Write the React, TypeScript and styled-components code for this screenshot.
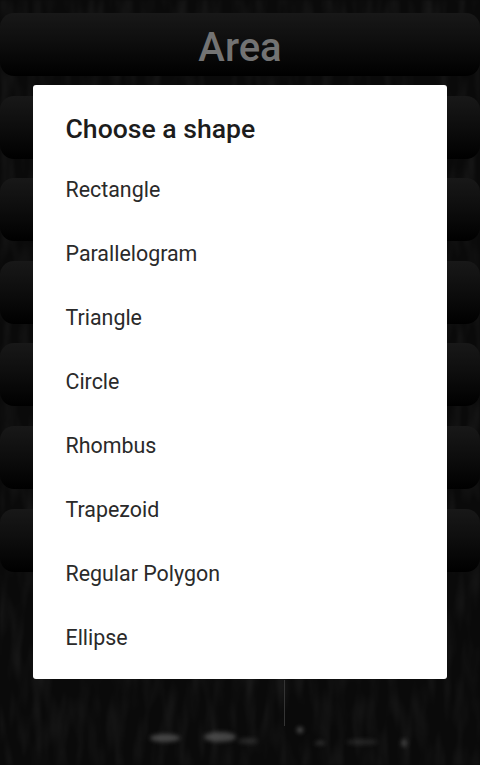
import styled, { createGlobalStyle } from "styled-components";

const shapes = [
  "Rectangle",
  "Parallelogram",
  "Triangle",
  "Circle",
  "Rhombus",
  "Trapezoid",
  "Regular Polygon",
  "Ellipse",
];

const GlobalStyle = createGlobalStyle`
  html, body {
    margin: 0;
    padding: 0;
    background: #0b0b0b;
  }
`;

const Screen = styled.div`
  position: relative;
  width: 480px;
  height: 765px;
  overflow: hidden;
  font-family: Roboto, "Liberation Sans", sans-serif;
  background-color: #0a0a0a;
`;

const Grain = styled.svg`
  position: absolute;
  inset: 0;
  width: 480px;
  height: 765px;
`;

const Menu = styled.div`
  position: relative;
  display: flex;
  flex-direction: column;
  gap: 19.6px;
  padding-top: 13px;
`;

const MenuButton = styled.div<{ $heading?: boolean }>`
  height: 63px;
  border-radius: 14px;
  display: flex;
  align-items: center;
  justify-content: center;
  padding-top: ${(p) => (p.$heading ? "5px" : "0")};
  box-sizing: border-box;
  background: linear-gradient(#181818, #0e0e0e 45%, #000);
  color: #737373;
  font-size: ${(p) => (p.$heading ? "40px" : "0")};
  font-weight: 500;
`;

const Sheet = styled.div`
  position: absolute;
  left: 33px;
  top: 85px;
  width: 414px;
  height: 594px;
  box-sizing: border-box;
  padding: 28px 32.5px 0;
  background: #fff;
  border-radius: 3px;
`;

const Heading = styled.h2`
  margin: 0 0 12.5px;
  height: 32px;
  line-height: 32px;
  font-size: 26.6px;
  font-weight: 500;
  color: #1c1c1c;
`;

const Options = styled.ul`
  margin: 0;
  padding: 0;
  list-style: none;
`;

const Option = styled.li`
  height: 64px;
  line-height: 64px;
  font-size: 21.4px;
  color: #2a2a2a;
`;

export default function App() {
  return (
    <Screen>
      <GlobalStyle />

      <Grain viewBox="0 0 480 765">
        <defs>
          <filter id="grain" x="0" y="0" width="100%" height="100%">
            <feTurbulence type="fractalNoise" baseFrequency="0.09 0.02" numOctaves="2" seed="7" />
            <feColorMatrix values="0 0 0 0 1  0 0 0 0 1  0 0 0 0 1  1.2 0 0 0 -0.5" />
            <feGaussianBlur stdDeviation="1" />
          </filter>
          <filter id="soft" x="-50%" y="-100%" width="200%" height="300%">
            <feGaussianBlur stdDeviation="2.2" />
          </filter>
        </defs>
        <rect width="480" height="765" filter="url(#grain)" opacity="0.1" />
        <line x1="284.5" y1="680" x2="284.5" y2="726" stroke="#343434" />
        <g fill="#6a6a6a" filter="url(#soft)">
          <ellipse cx="165" cy="738" rx="15" ry="4" opacity="0.6" />
          <ellipse cx="220" cy="737" rx="16" ry="5" opacity="0.6" />
          <ellipse cx="248" cy="741" rx="10" ry="3" opacity="0.3" />
          <ellipse cx="300" cy="730" rx="3" ry="3" opacity="0.7" />
          <ellipse cx="320" cy="743" rx="5" ry="2" opacity="0.4" />
          <ellipse cx="362" cy="742" rx="16" ry="3" opacity="0.25" />
          <ellipse cx="404" cy="743" rx="3" ry="4" opacity="0.5" />
        </g>
      </Grain>

      <Menu>
        <MenuButton $heading>Area</MenuButton>
        {[1, 2, 3, 4, 5, 6].map((row) => (
          <MenuButton key={row} />
        ))}
      </Menu>

      <Sheet>
        <Heading>Choose a shape</Heading>
        <Options>
          {shapes.map((shape) => (
            <Option key={shape}>{shape}</Option>
          ))}
        </Options>
      </Sheet>
    </Screen>
  );
}
